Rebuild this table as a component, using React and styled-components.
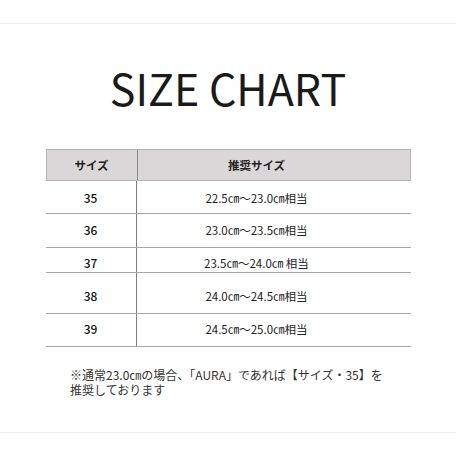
import React from 'react';
import styled, { createGlobalStyle } from 'styled-components';

const GlobalStyle = createGlobalStyle`
  html, body {
    margin: 0;
    padding: 0;
    background: #ffffff;
  }
  body {
    font-family: "Noto Sans CJK JP", "Noto Sans", sans-serif;
    color: #222222;
  }
`;

const Page = styled.div`
  width: 456px;
  height: 456px;
  padding-top: 23px;
  box-sizing: border-box;
`;

const Sheet = styled.section`
  height: 410px;
  box-sizing: border-box;
  border-top: 1px solid #eeeeee;
  border-bottom: 1px solid #eeeeee;
  display: flex;
  flex-direction: column;
  align-items: center;
`;

const Title = styled.h1`
  margin: 41px 0 0;
  font-size: 43px;
  line-height: 44px;
  font-weight: 400;
  color: #1a1a1a;
`;

const Table = styled.div`
  margin-top: 40px;
  width: 365px;
  display: flex;
  flex-direction: column;
`;

const HeadRow = styled.div`
  display: grid;
  grid-template-columns: 91px 1fr;
  height: 32px;
  box-sizing: border-box;
  background: #d9d7d7;
  border: 1px solid #b4b2b2;
`;

const HeadCell = styled.div`
  display: flex;
  align-items: center;
  justify-content: center;
  font-size: 11.5px;
  font-weight: 700;
  color: #222222;
  padding-right: ${p => (p.$wide ? '34px' : '0')};
  border-right: ${p => (p.$wide ? 'none' : '1px solid #8a8a8a')};
`;

const Row = styled.div`
  display: grid;
  grid-template-columns: 91px 1fr;
  height: ${p => p.$h}px;
  box-sizing: border-box;
  border-bottom: 1px solid #a6a6a6;
`;

const SizeCell = styled.div`
  border-right: 1px solid #7d7d7d;
  text-align: center;
  font-size: 12px;
  line-height: 16px;
  font-weight: 500;
  padding-top: ${p => p.$pt}px;
  color: #111111;
`;

const ValueCell = styled.div`
  text-align: center;
  font-size: 11.5px;
  line-height: 16px;
  padding-top: ${p => p.$pt}px;
  padding-right: 34px;
  color: #222222;
`;

const Note = styled.p`
  align-self: flex-start;
  margin: 20px 0 0 70px;
  width: 320px;
  font-size: 12px;
  line-height: 15px;
  color: #333333;
`;

const rows = [
  { size: '35', range: '22.5㎝～23.0㎝相当', h: 33, pt: 9 },
  { size: '36', range: '23.0㎝～23.5㎝相当', h: 34, pt: 8 },
  { size: '37', range: '23.5㎝～24.0㎝ 相当', h: 25, pt: 7 },
  { size: '38', range: '24.0㎝～24.5㎝相当', h: 41, pt: 15 },
  { size: '39', range: '24.5㎝～25.0㎝相当', h: 33, pt: 7 },
];

const App = () => {
  return (
    <Page>
      <GlobalStyle />
      <Sheet>
        <Title>SIZE CHART</Title>
        <Table>
          <HeadRow>
            <HeadCell>サイズ</HeadCell>
            <HeadCell $wide>推奨サイズ</HeadCell>
          </HeadRow>
          {rows.map(r => (
            <Row key={r.size} $h={r.h}>
              <SizeCell $pt={r.pt}>{r.size}</SizeCell>
              <ValueCell $pt={r.pt}>{r.range}</ValueCell>
            </Row>
          ))}
        </Table>
        <Note>
          ※通常23.0㎝の場合、「AURA」であれば【サイズ・35】を推奨しております
        </Note>
      </Sheet>
    </Page>
  );
};

export default App;
